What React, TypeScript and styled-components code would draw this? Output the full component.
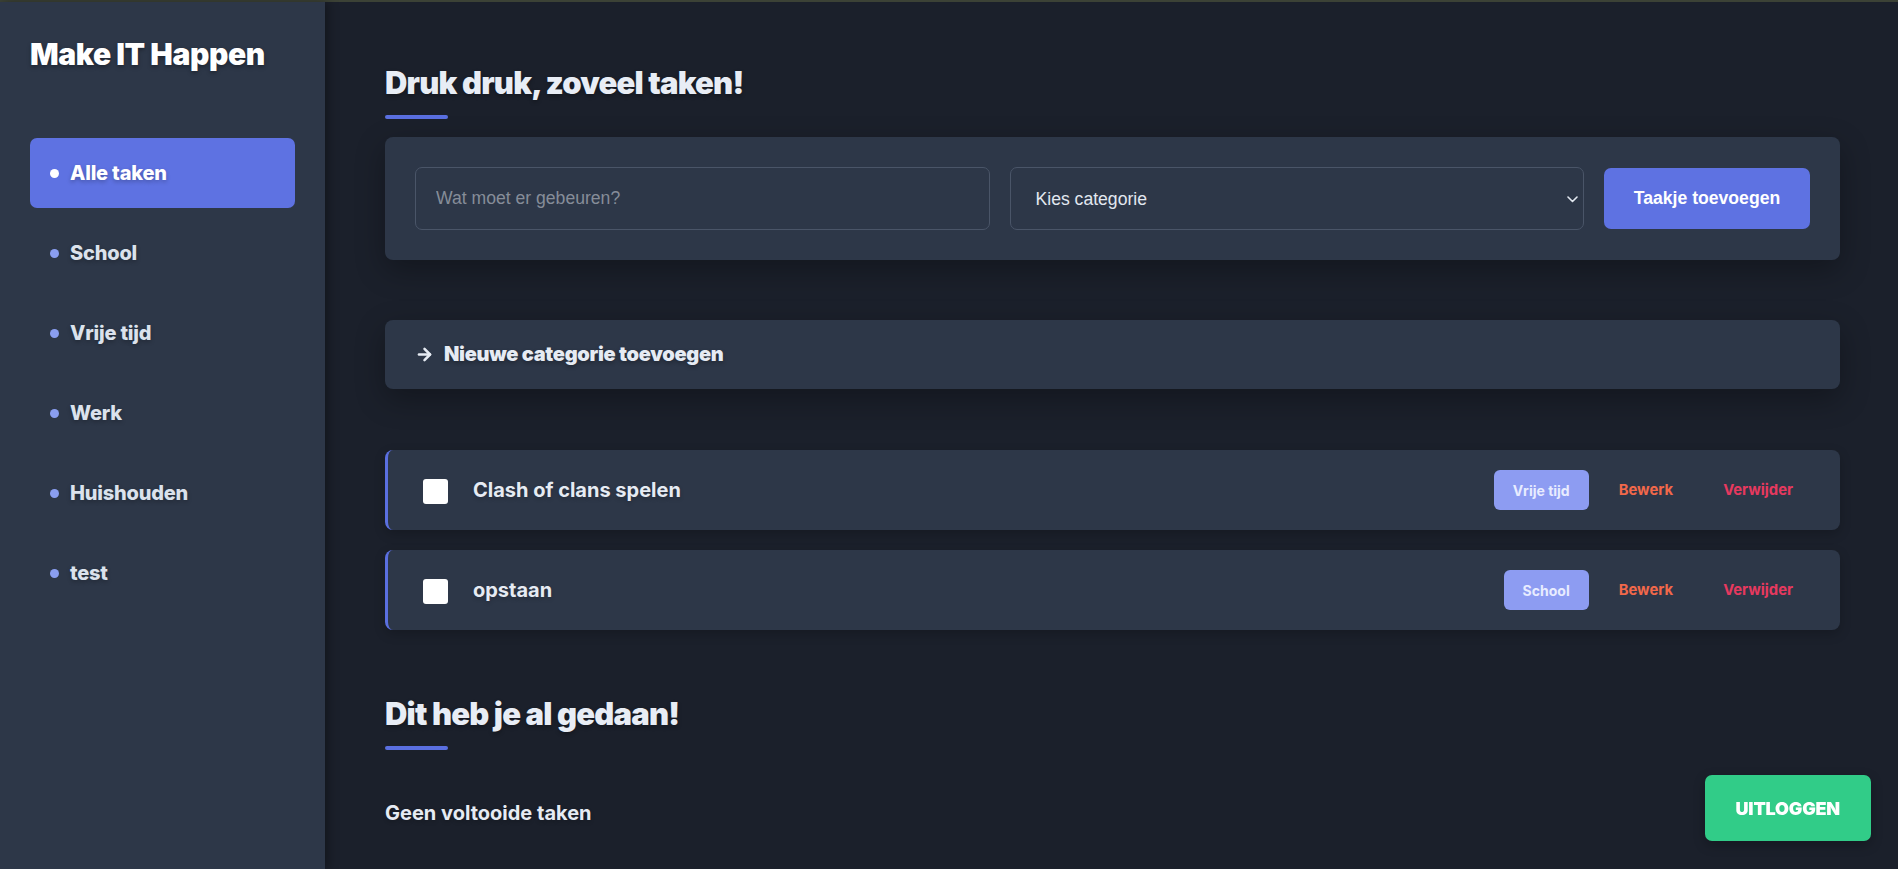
import React from "react";
import styled, { createGlobalStyle } from "styled-components";
import { ArrowRight } from "lucide-react";

const GlobalStyle = createGlobalStyle`
  * { box-sizing: border-box; }
  html, body { margin: 0; padding: 0; background: #1b202b; }
  body {
    font-family: Inter, "Noto Sans", sans-serif;
    color: #e2e8f0;
    overflow: hidden;
  }
`;

const Shell = styled.div`
  display: flex;
  min-height: 100vh;
  border-top: 2px solid #3c4236;
  background: #1b202b;
`;

const Sidebar = styled.aside`
  width: 325px;
  flex-shrink: 0;
  background: #2d3748;
  padding: 34px 30px 30px 30px;
  box-shadow: 3px 0 10px rgba(0, 0, 0, 0.35);
  min-height: calc(100vh - 2px);
  position: relative;
  z-index: 1;
`;

const Brand = styled.h1`
  margin: 0 0 66px 0;
  font-size: 30px;
  line-height: 1.2;
  font-weight: 900;
  letter-spacing: -0.4px;
  color: #ffffff;
  text-shadow: 0 2px 4px rgba(0, 0, 0, 0.35);
`;

const NavList = styled.nav`
  display: flex;
  flex-direction: column;
  gap: 10px;
`;

const NavItem = styled.a<{ $active?: boolean }>`
  display: flex;
  align-items: center;
  gap: 11px;
  height: 70px;
  padding: 0 20px;
  border-radius: 7px;
  background: ${(p) => (p.$active ? "#5e72e2" : "transparent")};
  color: ${(p) => (p.$active ? "#ffffff" : "#dbe2ec")};
  font-size: 20px;
  font-weight: 800;
  letter-spacing: -0.2px;
  text-shadow: 0 2px 4px rgba(0, 0, 0, 0.25);
  cursor: pointer;
`;

const Dot = styled.span<{ $active?: boolean }>`
  width: 9px;
  height: 9px;
  border-radius: 50%;
  background: ${(p) => (p.$active ? "#ffffff" : "#8a9ef0")};
  flex-shrink: 0;
`;

const Main = styled.main`
  flex: 1;
  padding: 62px 58px 20px 60px;
  display: flex;
  flex-direction: column;
`;

const Heading = styled.h2<{ $top?: number }>`
  margin: ${(p) => p.$top ?? 0}px 0 0 0;
  font-size: 31px;
  line-height: 1.2;
  font-weight: 900;
  letter-spacing: -0.8px;
  color: #e8edf5;
  text-shadow: 0 2px 4px rgba(0, 0, 0, 0.3);
  &::after {
    content: "";
    display: block;
    width: 63px;
    height: 4px;
    border-radius: 2px;
    background: #5a6fe0;
    margin-top: 14px;
  }
`;

const FormCard = styled.form`
  margin-top: 18px;
  display: grid;
  grid-template-columns: 1fr 1fr 206px;
  align-items: center;
  gap: 20px;
  padding: 30px;
  background: #2d3748;
  border-radius: 8px;
  box-shadow: 0 10px 30px rgba(0, 0, 0, 0.3);
`;

const TextInput = styled.input`
  width: 100%;
  min-width: 0;
  height: 63px;
  padding: 0 20px;
  background: #2d3748;
  border: 1px solid #4a5568;
  border-radius: 7px;
  color: #e2e8f0;
  font-family: "Liberation Sans", Arial, sans-serif;
  font-size: 17.6px;
  outline: none;
  &::placeholder {
    color: #868d99;
  }
`;

const SelectWrap = styled.div`
  min-width: 0;
  position: relative;
  display: flex;
`;

const Select = styled.select`
  flex: 1;
  min-width: 0;
  height: 63px;
  padding: 0 30px 0 25px;
  appearance: none;
  background: #2d3748;
  border: 1px solid #4a5568;
  border-radius: 7px;
  color: #e2e8f0;
  font-family: "Liberation Sans", Arial, sans-serif;
  font-size: 17.6px;
  outline: none;
`;

const Chevron = styled.svg`
  position: absolute;
  right: 6px;
  top: 50%;
  margin-top: -3px;
  pointer-events: none;
`;

const PrimaryButton = styled.button`
  width: 206px;
  height: 61px;
  border: none;
  border-radius: 7px;
  background: #5e72e2;
  color: #ffffff;
  font-family: "Liberation Sans", Arial, sans-serif;
  font-size: 17.6px;
  font-weight: 700;
  cursor: pointer;
`;

const CategoryToggle = styled.div`
  margin-top: 60px;
  display: flex;
  align-items: center;
  gap: 10px;
  padding: 22px 30px;
  line-height: 25px;
  background: #2d3748;
  border-radius: 8px;
  box-shadow: 0 10px 30px rgba(0, 0, 0, 0.3);
  font-size: 20px;
  font-weight: 900;
  letter-spacing: -0.3px;
  color: #e6ebf3;
  text-shadow: 0 2px 4px rgba(0, 0, 0, 0.3);
`;

const TaskList = styled.ul`
  list-style: none;
  margin: 61px 0 0 0;
  padding: 0;
  display: flex;
  flex-direction: column;
  gap: 20px;
`;

const TaskRow = styled.li`
  display: flex;
  align-items: center;
  height: 80px;
  padding: 0 27px 0 35px;
  background: #2d3748;
  border-left: 3px solid #5a6fe0;
  border-radius: 8px;
  box-shadow: 0 4px 12px rgba(0, 0, 0, 0.2);
`;

const CheckBox = styled.span`
  width: 25px;
  height: 25px;
  border-radius: 3px;
  background: #ffffff;
  flex-shrink: 0;
  margin-top: 3px;
`;

const TaskText = styled.span`
  flex: 1;
  margin-left: 25px;
  font-size: 20px;
  font-weight: 700;
  color: #e6ebf3;
  text-shadow: 0 2px 4px rgba(0, 0, 0, 0.2);
`;

const Actions = styled.div`
  display: flex;
  align-items: center;
  gap: 10px;
`;

const Badge = styled.span`
  display: inline-flex;
  align-items: center;
  height: 40px;
  padding: 0 19px;
  border-radius: 6px;
  background: #8d9cf2;
  color: #e8ecff;
  font-size: 14px;
  font-weight: 700;
`;

const LinkButton = styled.button<{ $color: string }>`
  background: transparent;
  border: none;
  padding: 0 20px;
  height: 40px;
  color: ${(p) => p.$color};
  font-family: Inter, sans-serif;
  font-size: 14.8px;
  font-weight: 700;
  cursor: pointer;
`;

const EmptyText = styled.p`
  margin: 48px 0 0 0;
  font-size: 20px;
  line-height: 1.5;
  font-weight: 700;
  color: #e6ebf3;
  text-shadow: 0 2px 4px rgba(0, 0, 0, 0.2);
`;

const LogoutButton = styled.button`
  position: fixed;
  right: 27px;
  bottom: 28px;
  height: 66px;
  padding: 0 31px;
  border: none;
  border-radius: 7px;
  background: #31cc88;
  color: #ffffff;
  font-family: Inter, sans-serif;
  font-size: 18px;
  font-weight: 900;
  letter-spacing: -0.2px;
  text-transform: uppercase;
  box-shadow: 0 4px 12px rgba(0, 0, 0, 0.25);
  cursor: pointer;
`;

const categories = ["Alle taken", "School", "Vrije tijd", "Werk", "Huishouden", "test"];

const tasks = [
  { title: "Clash of clans spelen", category: "Vrije tijd" },
  { title: "opstaan", category: "School" },
];

export default function App() {
  return (
    <>
      <GlobalStyle />
      <Shell>
        <Sidebar>
          <Brand>Make IT Happen</Brand>
          <NavList>
            {categories.map((c, i) => (
              <NavItem key={c} $active={i === 0}>
                <Dot $active={i === 0} />
                {c}
              </NavItem>
            ))}
          </NavList>
        </Sidebar>
        <Main>
          <Heading>Druk druk, zoveel taken!</Heading>
          <FormCard onSubmit={(e) => e.preventDefault()}>
            <TextInput placeholder="Wat moet er gebeuren?" />
            <SelectWrap>
              <Select defaultValue="">
                <option value="">Kies categorie</option>
                {categories.slice(1).map((c) => (
                  <option key={c} value={c}>
                    {c}
                  </option>
                ))}
              </Select>
              <Chevron width="11" height="7" viewBox="0 0 11 7">
                <path d="M1 1l4.5 4.5L10 1" fill="none" stroke="#e2e8f0" strokeWidth="1.6" strokeLinecap="round" strokeLinejoin="round" />
              </Chevron>
            </SelectWrap>
            <PrimaryButton type="submit">Taakje toevoegen</PrimaryButton>
          </FormCard>
          <CategoryToggle>
            <ArrowRight size={19} strokeWidth={3.2} />
            Nieuwe categorie toevoegen
          </CategoryToggle>
          <TaskList>
            {tasks.map((t) => (
              <TaskRow key={t.title}>
                <CheckBox />
                <TaskText>{t.title}</TaskText>
                <Actions>
                  <Badge>{t.category}</Badge>
                  <LinkButton $color="#f2684a">Bewerk</LinkButton>
                  <LinkButton $color="#e7395f">Verwijder</LinkButton>
                </Actions>
              </TaskRow>
            ))}
          </TaskList>
          <Heading $top={65}>Dit heb je al gedaan!</Heading>
          <EmptyText>Geen voltooide taken</EmptyText>
        </Main>
      </Shell>
      <LogoutButton>Uitloggen</LogoutButton>
    </>
  );
}
